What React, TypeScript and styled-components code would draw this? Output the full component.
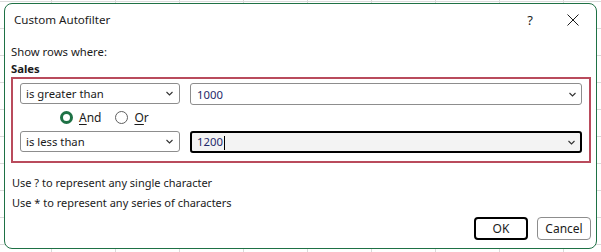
import React from "react";
import styled, { createGlobalStyle } from "styled-components";

const Global = createGlobalStyle`
  html, body { margin: 0; padding: 0; }
  body {
    width: 601px;
    height: 252px;
    overflow: hidden;
    background-color: #ffffff;
    background-image:
      repeating-linear-gradient(to right, transparent 0 51px, #dadada 51px 52px, transparent 52px 64px),
      repeating-linear-gradient(to bottom, transparent 0 1px, #dadada 1px 2px, transparent 2px 27px);
    font-family: "Noto Sans", "Open Sans", sans-serif;
    font-size: 11px;
    color: #1b1b1b;
  }
`;

const Dialog = styled.div`
  margin: 3px 0 0 4px;
  width: 591px;
  height: 244px;
  border: 1px solid #1e7145;
  border-radius: 8px;
  background: #ffffff;
  display: flex;
  flex-direction: column;
  box-sizing: content-box;
`;

const TitleBar = styled.div`
  height: 31px;
  display: flex;
  align-items: center;
  padding-left: 9px;
`;

const Title = styled.div`
  flex: 1;
  font-size: 11.6px;
  color: #1b1b1b;
`;

const TitleButton = styled.div<{ $w: number; $mr?: number }>`
  width: ${(p) => p.$w}px;
  margin-right: ${(p) => p.$mr ?? 0}px;
  height: 31px;
  display: flex;
  align-items: center;
  justify-content: center;
  font-size: 13px;
  color: #1b1b1b;
`;

const Body = styled.div`
  flex: 1;
  display: flex;
  flex-direction: column;
  padding: 8px 5px 0 6px;
`;

const Label = styled.div<{ $bold?: boolean }>`
  height: 17px;
  line-height: 17px;
  font-size: 11.3px;
  font-weight: ${(p) => (p.$bold ? 700 : 400)};
`;

const CriteriaBox = styled.div`
  border: 2px solid #b94b5c;
  padding: 4px 5px 8px 7px;
  display: grid;
  grid-template-columns: 160px 392px;
  column-gap: 10px;
  grid-template-rows: 21px 27px 22px;
`;

const Select = styled.div`
  box-sizing: border-box;
  height: 21px;
  border: 1px solid #8d8d8d;
  border-radius: 3px;
  display: flex;
  align-items: center;
  padding: 0 6px 0 5px;
  background: #ffffff;
  font-size: 11.3px;
`;

const Combo = styled.div<{ $focused?: boolean }>`
  box-sizing: border-box;
  height: 22px;
  border: ${(p) => (p.$focused ? "2px solid #000000" : "1px solid #8d8d8d")};
  border-radius: 3px;
  display: flex;
  align-items: center;
  padding: 0 5px 0 ${(p) => (p.$focused ? 5 : 6)}px;
  background: ${(p) => (p.$focused ? "#f3f3f3" : "#ffffff")};
  font-size: 11.3px;
`;

const Value = styled.span`
  flex: 1;
  color: #1f2a6b;
`;

const Caret = styled.span`
  display: inline-block;
  width: 1px;
  height: 14px;
  background: #000;
  vertical-align: middle;
  margin-left: 1px;
`;

const SelectText = styled.span`
  flex: 1;
`;

const RadioRow = styled.div`
  grid-column: 1 / 3;
  display: flex;
  align-items: center;
  padding-left: 40px;
`;

const RadioItem = styled.div`
  display: flex;
  align-items: center;
  margin-right: 14px;
`;

const RadioCircle = styled.span<{ $on?: boolean }>`
  box-sizing: border-box;
  width: 13px;
  height: 13px;
  border-radius: 50%;
  border: ${(p) => (p.$on ? "3.5px solid #1e7145" : "1px solid #5f5f5f")};
  background: #ffffff;
  margin-right: 6px;
`;

const RadioLabel = styled.span`
  font-size: 12px;
  u { text-decoration-thickness: 1px; text-underline-offset: 2px; }
`;

const Hints = styled.div`
  margin-top: 10px;
  padding-left: 1px;
  display: flex;
  flex-direction: column;
`;

const Hint = styled.div`
  height: 20px;
  line-height: 20px;
`;

const Footer = styled.div`
  margin-top: auto;
  display: flex;
  justify-content: flex-end;
  gap: 9px;
  padding-bottom: 8px;
`;

const Button = styled.div<{ $primary?: boolean }>`
  box-sizing: border-box;
  width: 54px;
  height: 23px;
  border-radius: 4px;
  border: ${(p) => (p.$primary ? "2px solid #000000" : "1px solid #8d8d8d")};
  display: flex;
  align-items: center;
  justify-content: center;
  font-size: 12px;
  background: #ffffff;
`;

const Chevron = () => (
  <svg width="7" height="5" viewBox="0 0 7 5">
    <path d="M0.5 1 L3.5 4 L6.5 1" fill="none" stroke="#333" strokeWidth="1.1" />
  </svg>
);

const CloseIcon = () => (
  <svg width="12" height="12" viewBox="0 0 12 12">
    <path d="M0.5 0.5 L11.5 11.5 M11.5 0.5 L0.5 11.5" stroke="#1b1b1b" strokeWidth="1" />
  </svg>
);

export default function App() {
  return (
    <>
      <Global />
      <Dialog>
        <TitleBar>
          <Title>Custom Autofilter</Title>
          <TitleButton $w={22} $mr={9}>?</TitleButton>
          <TitleButton $w={46}>
            <CloseIcon />
          </TitleButton>
        </TitleBar>
        <Body>
          <Label>Show rows where:</Label>
          <Label $bold>Sales</Label>
          <CriteriaBox>
            <Select>
              <SelectText>is greater than</SelectText>
              <Chevron />
            </Select>
            <Combo>
              <Value>1000</Value>
              <Chevron />
            </Combo>
            <RadioRow>
              <RadioItem>
                <RadioCircle $on />
                <RadioLabel>
                  <u>A</u>nd
                </RadioLabel>
              </RadioItem>
              <RadioItem>
                <RadioCircle />
                <RadioLabel>
                  <u>O</u>r
                </RadioLabel>
              </RadioItem>
            </RadioRow>
            <Select>
              <SelectText>is less than</SelectText>
              <Chevron />
            </Select>
            <Combo $focused>
              <Value>
                1200
                <Caret />
              </Value>
              <Chevron />
            </Combo>
          </CriteriaBox>
          <Hints>
            <Hint>Use ? to represent any single character</Hint>
            <Hint>Use * to represent any series of characters</Hint>
          </Hints>
          <Footer>
            <Button $primary>OK</Button>
            <Button>Cancel</Button>
          </Footer>
        </Body>
      </Dialog>
    </>
  );
}
